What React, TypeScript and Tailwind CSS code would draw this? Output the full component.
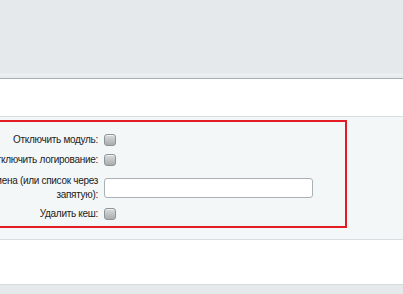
export default function App() {
  const labelCls =
    "flex w-[200px] shrink-0 justify-end pr-[6px] text-right text-[10px] tracking-[-0.3px] leading-[14px] text-[#222] whitespace-nowrap";

  return (
    <div
      className="w-[403px] h-[294px] overflow-hidden bg-white"
      style={{ fontFamily: "'Liberation Sans', Arial, sans-serif" }}
    >
      {/* top toolbar area */}
      <div className="h-[74px] bg-[#e5e9eb]" />
      <div className="h-[4px] border-t border-[#f0f3f4] bg-[#e8ecee]" />
      <div className="h-[1px] bg-[#a7afb2]" />

      {/* white spacer */}
      <div className="h-[37px] bg-white" />

      {/* settings panel */}
      <div className="border-y border-[#d9dee0] bg-[#f4f7f8] pt-[3px] pb-[11px]">
        <div className="ml-[-98px] w-[445px] border-2 border-[#e31b23] pt-[8px] pb-[4px]">
          <div className="flex h-[20px] items-center">
            <div className={labelCls}>Отключить модуль:</div>
            <Checkbox />
          </div>
          <div className="flex h-[20px] items-center">
            <div className={labelCls}>Отключить логирование:</div>
            <Checkbox />
          </div>
          <div className="flex h-[36px] items-center">
            <div className={labelCls}>
              <div>
                Отключить для домена (или список через
                <br />
                запятую):
              </div>
            </div>
            <input
              type="text"
              className="h-[20px] w-[209px] rounded-[3px] border border-[#a9b1b5] bg-white px-1 text-[11px] outline-none"
            />
          </div>
          <div className="flex h-[16px] items-center">
            <div className={labelCls}>Удалить кеш:</div>
            <Checkbox />
          </div>
        </div>
      </div>

      {/* white spacer */}
      <div className="h-[44px] bg-white" />
      <div className="h-[1px] bg-[#d6dcde]" />
      <div className="h-[20px] bg-[#e5e9eb]" />
    </div>
  );
}

function Checkbox() {
  return (
    <span className="inline-block h-[12px] w-[12px] rounded-[3px] border border-[#8e9496] bg-gradient-to-b from-[#d9dcdd] to-[#a9adae] shadow-[inset_0_1px_0_rgba(255,255,255,0.6)]" />
  );
}
